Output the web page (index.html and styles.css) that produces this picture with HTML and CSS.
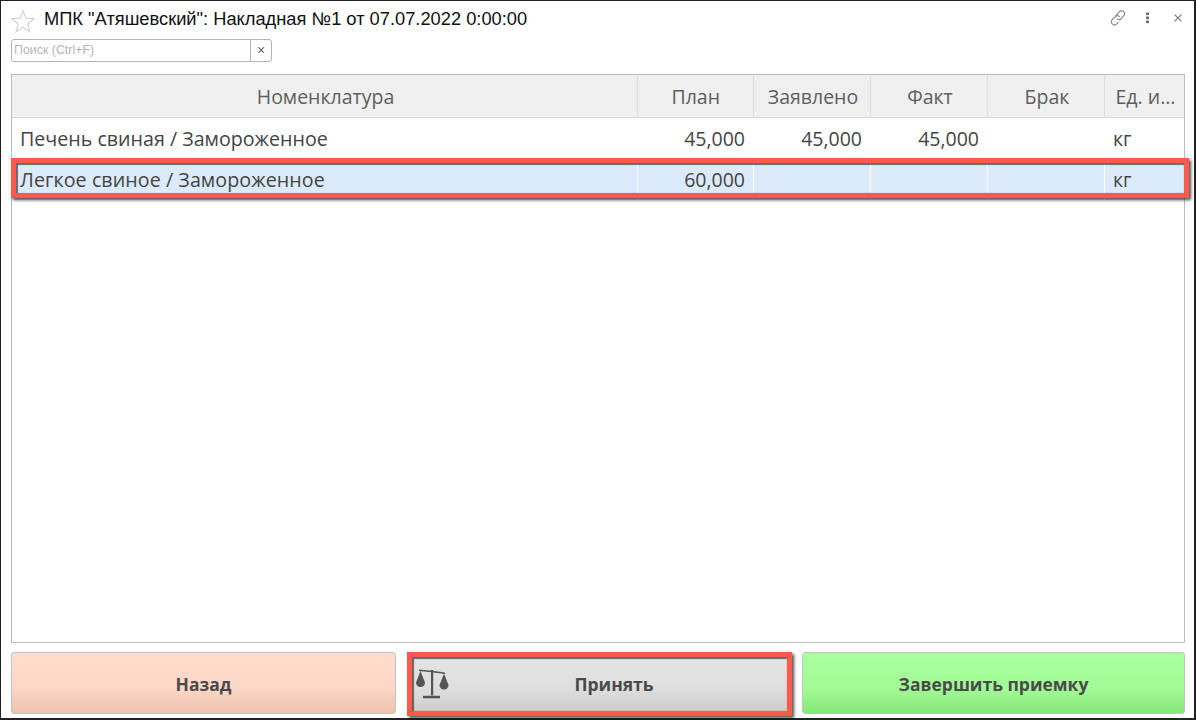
FILE: index.html
```html
<!DOCTYPE html>
<html lang="ru">
<head>
<meta charset="utf-8">
<title>Накладная</title>
<link rel="stylesheet" href="styles.css">
</head>
<body>
<div class="window">
  <header class="titlebar">
    <svg class="star" width="26" height="26" viewBox="0 0 26 26"><path d="M13 2.500l3 7.600 8.200.5-6.300 5.200 2 8-6.900-4.400-6.900 4.400 2-8-6.300-5.200 8.200-.5z" fill="#fff" stroke="#d2d2d2" stroke-width="1.100"/></svg>
    <h1 class="title">МПК "Атяшевский": Накладная №1 от 07.07.2022 0:00:00</h1>
    <div class="tools">
      <svg width="18" height="18" viewBox="0 0 18 18" fill="none" stroke="#8f8f8f" stroke-width="1.200" stroke-linecap="round"><path d="M7 6.500l3.200-3.700a3 3 0 0 1 4.600 3.900l-2.600 3a3 3 0 0 1-4 .2"/><path d="M10.500 7.700a3 3 0 0 0-4-.2l-3.200 3a3 3 0 0 0 4.200 4.600l1.500-1.400"/></svg>
      <svg class="tool-dots" width="6" height="12" viewBox="0 0 6 12" fill="#6f6f6f"><rect x="1" y="0.500" width="3" height="2.600"/><rect x="1" y="4.500" width="3" height="2.600"/><rect x="1" y="8.500" width="3" height="2.600"/></svg>
      <svg width="10" height="10" viewBox="0 0 10 10" stroke="#8a8a8a" stroke-width="1.300"><path d="M1.500 1.500l7 7M8.500 1.500l-7 7"/></svg>
    </div>
  </header>
  <div class="search">
    <span class="search-input">Поиск (Ctrl+F)</span>
    <span class="search-clear">×</span>
  </div>
  <div class="table">
    <div class="row head">
      <div class="cell name center">Номенклатура</div>
      <div class="cell plan right-head">План</div>
      <div class="cell num center">Заявлено</div>
      <div class="cell num center">Факт</div>
      <div class="cell num center">Брак</div>
      <div class="cell unit center">Ед. и...</div>
    </div>
    <div class="row">
      <div class="cell name item">Печень свиная / Замороженное</div>
      <div class="cell plan right">45,000</div>
      <div class="cell num right">45,000</div>
      <div class="cell num right">45,000</div>
      <div class="cell num right"></div>
      <div class="cell unit">кг</div>
    </div>
    <div class="row selected">
      <div class="cell name item">Легкое свиное / Замороженное</div>
      <div class="cell plan right">60,000</div>
      <div class="cell num right"></div>
      <div class="cell num right"></div>
      <div class="cell num right"></div>
      <div class="cell unit">кг</div>
    </div>
    <div class="mark mark-row"></div>
  </div>
  <div class="actions">
    <button class="btn back">Назад</button>
    <button class="btn accept">
      <svg class="scales" width="34" height="32" viewBox="0 0 34 32" fill="#555"><path d="M4 3.200l13 1.300 13 1.800" fill="none" stroke="#555" stroke-width="1.500"/><path d="M16 3h2.200v25.500H16z"/><path d="M8 28.800h17v2.500H8z"/><path d="M5.500 4L1 15.500a4.500 4.500 0 0 0 9 0z"/><path d="M29 6.500L24.500 18a4.500 4.500 0 0 0 9 0z"/></svg>
      Принять
      <span class="mark mark-btn"></span>
    </button>
    <button class="btn finish">Завершить приемку</button>
  </div>
</div>
</body>
</html>
```
FILE: styles.css
```css
* { box-sizing: border-box; }
html, body { margin: 0; height: 100%; }
body { background: #fff; overflow: hidden; }
.window {
  height: 720px;
  border: solid #222;
  border-width: 1px 2px 2px 1px;
  padding: 0 9px 4px 10px;
  display: flex;
  flex-direction: column;
  background: #fff;
  font-family: "Open Sans", sans-serif;
  color: #444;
}
.titlebar { height: 37px; display: flex; align-items: center; flex: none; position: relative; }
.star { flex: none; margin: 3px 8px 0 -1px; }
.title { margin: -2px 0 0; font: 400 18.300px/20px "Liberation Sans", sans-serif; color: #111; flex: 1; white-space: nowrap; }
.tools { display: flex; align-items: center; flex: none; margin: -3px 2px 0 0; }
.tool-dots { margin: 0 22px 0 18px; }
.search { height: 23px; width: 261px; flex: none; display: flex; border: 1px solid #b4b4b4; border-radius: 3px; margin-top: 1px; }
.search-input { flex: 1; font: 400 12.400px/21px "Liberation Sans", sans-serif; color: #b5b5b5; padding-left: 2px; border-right: 1px solid #b4b4b4; }
.search-clear { width: 20px; text-align: center; font: 400 14px/21px "Liberation Sans", sans-serif; color: #666; }
.table { margin-top: 12px; height: 569px; flex: none; border: 1px solid #bdbdbd; position: relative; }
.row { display: flex; height: 41px; font-size: 19.500px; line-height: 42px; color: #444; }
.row.head { height: 43px; background: #f0f0f0; border-bottom: 1px solid #d8d8d8; color: #5e5e5e; line-height: 44px; }
.cell { padding: 0 8px; white-space: nowrap; overflow: hidden; border-right: 1px solid transparent; }
.head .cell { border-right: 1px solid #dcdcdc; }
.head .center { padding: 0 7px 0 9px; }
.selected { background: #dcebfb; }
.selected .cell { border-right-color: #fff; }
.selected .item { letter-spacing: .07px; }
.row .cell:last-child { border-right: none; }
.name { width: 626px; }
.item { font-size: 19.650px; }
.plan { width: 116px; }
.num { width: 117px; }
.unit { flex: 1; }
.center { text-align: center; }
.right { text-align: right; }
.right-head { text-align: right; padding-right: 33px; }
.actions { display: grid; grid-template-columns: 385px 384px 1fr; gap: 11px; margin-top: 9px; height: 62px; flex: none; }
.btn { position: relative; border: 1px solid #c4c4c4; border-radius: 3px; font: 700 17.500px "Open Sans", sans-serif; color: #4a4a4a; padding: 2px 0 0; }
.back { background: linear-gradient(#ffdccd 0%, #fdd6c6 60%, #ecc2b0 100%); }
.accept { background: linear-gradient(#e4e4e4 0%, #dfdfdf 55%, #cdcdcd 100%); padding-left: 30px; }
.finish { background: linear-gradient(#aaffa0 0%, #a2fb96 60%, #86e77a 100%); }
.scales { position: absolute; left: 7px; top: 14px; }
.mark { position: absolute; pointer-events: none; border: 5px solid #fc5a4c; box-shadow: 2px 2px 3px rgba(0,0,0,.7), inset 1px 1px 1px 1px rgba(0,0,0,.55); }
.mark-row { left: -1px; right: -5px; top: 83px; height: 40px; }
.mark-btn { left: -1px; top: -1px; right: -2px; bottom: -3px; }
```
